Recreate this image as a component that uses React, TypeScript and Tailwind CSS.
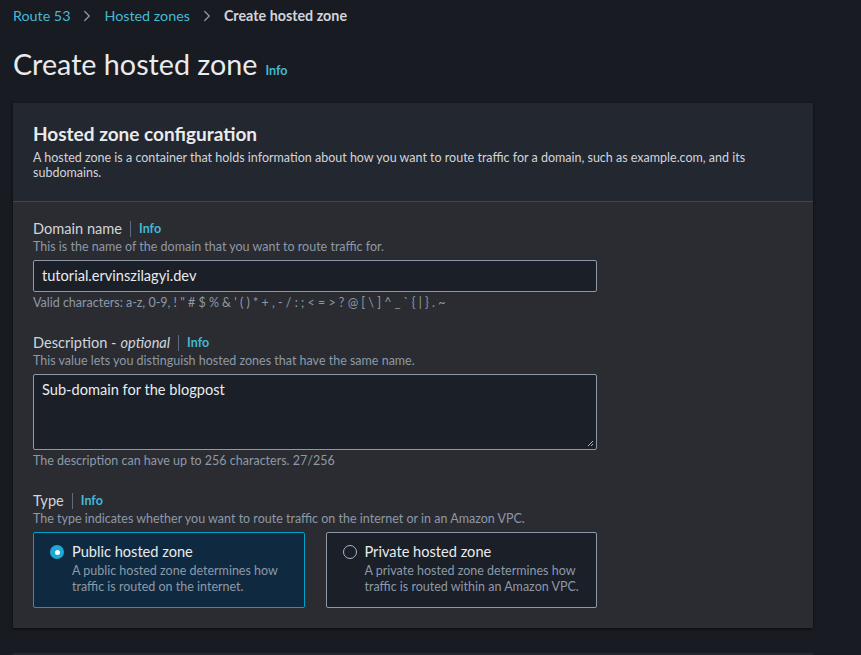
import { ChevronRight } from 'lucide-react'

function Info() {
  return (
    <span className="ml-2 border-l border-[#5f6b7a] pl-2 text-[12.5px] font-bold leading-[16px] text-[#44b9d6]">Info</span>
  )
}

function Label({ children }: { children: React.ReactNode }) {
  return (
    <div className="flex items-center text-[14.6px] leading-[20px] text-[#d1d5db]">
      {children}
      <Info />
    </div>
  )
}

function Hint({ children }: { children: React.ReactNode }) {
  return <p className="text-[12.5px] leading-[16px] text-[#8d99a8]">{children}</p>
}

function RadioCard({ title, body, checked }: { title: string; body: string; checked?: boolean }) {
  return (
    <div
      className={
        checked
          ? 'flex gap-2 rounded-[2px] border border-[#00a1c9] bg-[#0f2a40] px-4 pt-[9px] pb-3'
          : 'flex gap-2 rounded-[2px] border border-[#8d99a8] bg-[#1a1f28] px-4 pt-[9px] pb-3'
      }
    >
      <div className="flex h-5 items-center">
        {checked ? (
          <span className="flex h-[14px] w-[14px] items-center justify-center rounded-full bg-[#1ea8d6]">
            <span className="h-[5px] w-[5px] rounded-full bg-white" />
          </span>
        ) : (
          <span className="h-[14px] w-[14px] rounded-full border border-[#aab7c4]" />
        )}
      </div>
      <div>
        <p className="text-[14.6px] leading-[20px] text-[#e9ebed]">{title}</p>
        <p className="mt-px text-[12.5px] leading-[16px] text-[#8d99a8]">{body}</p>
      </div>
    </div>
  )
}

export default function App() {
  return (
    <div className="min-h-[655px] w-full overflow-hidden bg-[#181b22] px-[13px] pt-[6px] font-['Lato','Liberation_Sans',sans-serif]">
      {/* Breadcrumbs */}
      <nav className="flex h-5 items-center text-[14.3px] leading-[20px]">
        <span className="text-[#44b9d6]">Route 53</span>
        <ChevronRight className="mx-[8px] h-[18px] w-[18px] text-[#8d99a8]" strokeWidth={1.75} />
        <span className="text-[#44b9d6]">Hosted zones</span>
        <ChevronRight className="mx-[8px] h-[18px] w-[18px] text-[#8d99a8]" strokeWidth={1.75} />
        <span className="font-bold text-[#d1d5db]">Create hosted zone</span>
      </nav>

      <div className="mt-[20px] flex items-baseline">
        <h1 className="text-[28.7px] leading-[36px] text-[#e9ebed]">Create hosted zone</h1>
        <span className="ml-2 text-[12.5px] font-bold text-[#44b9d6]">Info</span>
      </div>

      {/* Configuration card */}
      <section className="mt-[21px] w-[800px] bg-[#2a2c31] shadow-[0_1px_3px_rgba(0,0,0,0.6)]">
        <header className="border-b border-[#414750] bg-[#232730] px-5 pt-[19px] pb-[21px]">
          <h2 className="text-[19px] font-bold leading-[24px] text-[#e9ebed]">Hosted zone configuration</h2>
          <p className="mt-1 max-w-[730px] text-[12.5px] leading-[15px] text-[#d1d5db]">
            A hosted zone is a container that holds information about how you want to route traffic for a domain, such as example.com, and its subdomains.
          </p>
        </header>

        <div className="w-[604px] px-5 pt-[17px] pb-5">
          <Label>Domain name</Label>
          <Hint>This is the name of the domain that you want to route traffic for.</Hint>
          <div className="mt-[5px] flex h-8 items-center rounded-[2px] border border-[#8d99a8] bg-[#1a1f28] px-2 text-[14.6px] text-[#e9ebed]">
            tutorial.ervinszilagyi.dev
          </div>
          <div className="mt-[3px]">
            <Hint>Valid characters: a-z, 0-9, ! " # $ % &amp; ' ( ) * + , - / : ; &lt; = &gt; ? @ [ \ ] ^ _ ` {'{'} | {'}'} . ~</Hint>
          </div>

          <div className="mt-[22px]">
            <Label>
              Description - <i className="ml-1">optional</i>
            </Label>
          </div>
          <Hint>This value lets you distinguish hosted zones that have the same name.</Hint>
          <div className="relative mt-[5px] h-[76px] rounded-[2px] border border-[#8d99a8] bg-[#1a1f28] px-2 pt-[5px] text-[14.6px] leading-[20px] text-[#e9ebed]">
            Sub-domain for the blogpost
            <svg className="absolute right-[2px] bottom-[2px]" width="7" height="7" viewBox="0 0 7 7">
              <path d="M1 6 L6 1 M4 6 L6 4" stroke="#aab7c4" strokeWidth="1" />
            </svg>
          </div>
          <div className="mt-[3px]">
            <Hint>The description can have up to 256 characters. 27/256</Hint>
          </div>

          <div className="mt-[22px]">
            <Label>Type</Label>
          </div>
          <Hint>The type indicates whether you want to route traffic on the internet or in an Amazon VPC.</Hint>
          <div className="mt-[5px] grid grid-cols-2 gap-[21px]">
            <RadioCard checked title="Public hosted zone" body="A public hosted zone determines how traffic is routed on the internet." />
            <RadioCard title="Private hosted zone" body="A private hosted zone determines how traffic is routed within an Amazon VPC." />
          </div>
        </div>
      </section>

      <div className="mt-[25px] h-10 w-[800px] bg-[#232730]" />
    </div>
  )
}
